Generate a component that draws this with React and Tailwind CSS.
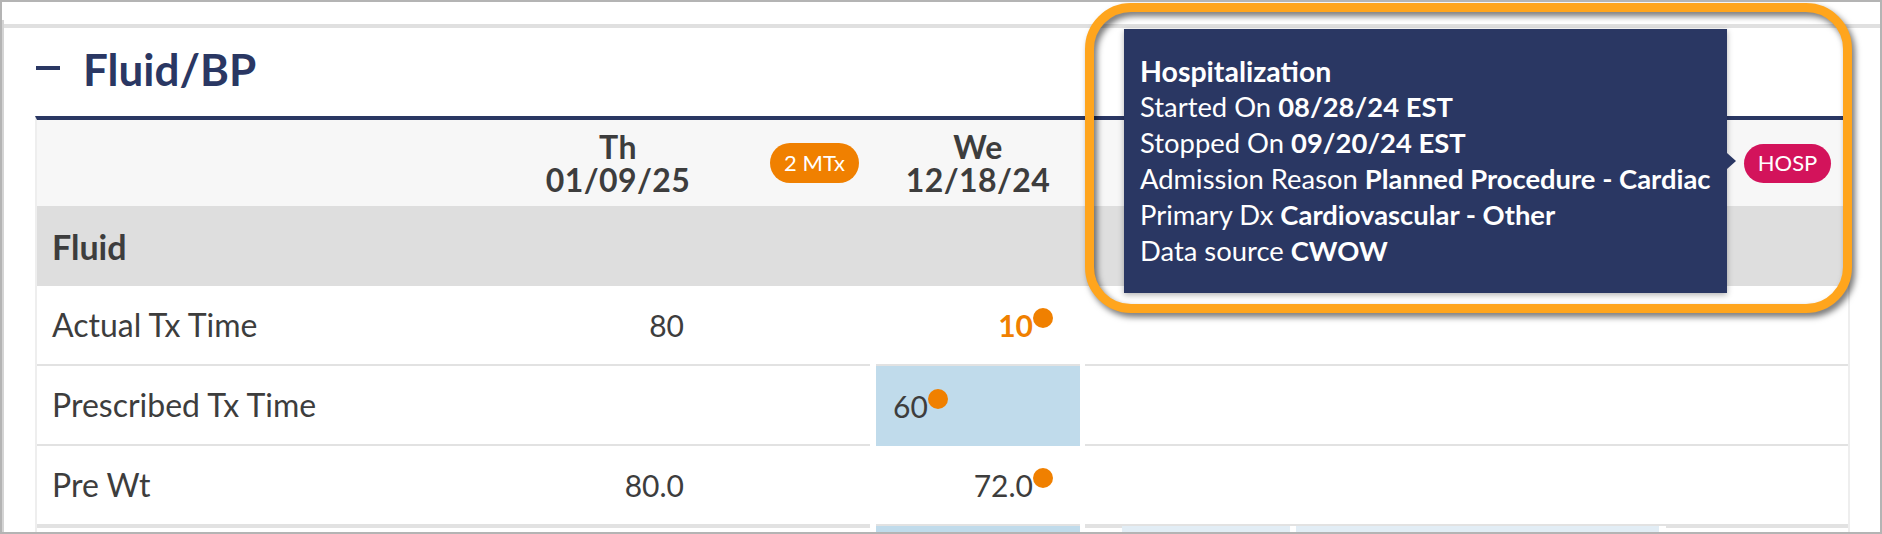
const NAVY = 'bg-[#2a3763]'

function Dot({ className = '' }) {
  return <span className={`inline-block w-[20px] h-[20px] rounded-full bg-[#f08000] ${className}`} />
}

function Value({ children, dot, orange }) {
  return (
    <span className="inline-flex items-start">
      <span className={orange ? 'text-[#f08000] font-bold' : ''}>{children}</span>
      {dot && <Dot className="-mt-[2px]" />}
    </span>
  )
}

function Row({ label, c1, c2, c2Blue }) {
  const line = 'border-b-2 border-[#e2e2e2]'
  return (
    <div className="flex h-[80px] text-[30px] leading-[30px] text-[#3d3d3d]">
      <div className={`w-[468px] flex items-center pl-[15px] text-[32px] ${line}`}>{label}</div>
      <div className={`w-[226px] flex items-center justify-end pr-[47px] ${line}`}>{c1}</div>
      <div className={`w-[139px] ${line}`} />
      <div className="w-[6px]" />
      {c2Blue ? (
        <div className="w-[204px] flex items-center pl-[17px] bg-[#c0dbeb]">{c2}</div>
      ) : (
        <div className={`w-[204px] flex items-center justify-end pr-[27px] ${line}`}>{c2}</div>
      )}
      <div className="w-[5px]" />
      <div className={`flex-1 ${line}`} />
    </div>
  )
}

export default function App() {
  return (
    <div className="relative w-[1882px] h-[534px] overflow-hidden bg-white border-2 border-[#b4b4b4] [font-family:Lato,'Open_Sans',sans-serif]">
      <div className="h-full pt-[18px]">
        <div className="h-full border-l-2 border-[#d4d4d4]">
          <div className="h-[4px]" />
          <div className="h-[4px] bg-[#e0e0e0]" />
          <div className="pl-[31px] pr-[30px]">
            <div className="h-[88px] flex items-start pt-[19px]">
              <div className={`ml-[1px] mt-[19px] w-[24px] h-[4px] ${NAVY}`} />
              <h1 className="ml-[23px] text-[44px] leading-[44px] font-bold text-[#2a3763]">Fluid/BP</h1>
            </div>

            <div className="border-t-4 border-t-[#2a3763] border-x-2 border-x-[#eeeeee]">
              <div className="flex h-[86px] bg-[#f7f7f7] text-[32px] leading-[33px] tracking-[0.4px] font-bold text-[#3d3d3d]">
                <div className="w-[468px]" />
                <div className="w-[226px] flex flex-col items-center justify-center">
                  <span>Th</span>
                  <span>01/09/25</span>
                </div>
                <div className="w-[139px] flex items-center justify-end pr-[11px]">
                  <span className="w-[89px] h-[40px] rounded-full bg-[#f08000] text-white text-[22px] leading-none tracking-normal font-normal flex items-center justify-center">2 MTx</span>
                </div>
                <div className="w-[6px]" />
                <div className="w-[204px] flex flex-col items-center justify-center">
                  <span>We</span>
                  <span>12/18/24</span>
                </div>
                <div className="w-[5px]" />
                <div className="flex-1 flex items-center justify-end pr-[17px]">
                  <span className="w-[87px] h-[39px] rounded-full bg-[#d3135b] text-white text-[22px] leading-none tracking-normal font-normal flex items-center justify-center">HOSP</span>
                </div>
              </div>

              <div className="h-[80px] bg-[#dedede] flex items-center pl-[15px] text-[34px] font-bold text-[#3d3d3d]">Fluid</div>

              <Row label="Actual Tx Time" c1="80" c2={<Value dot orange>10</Value>} />
              <Row label="Prescribed Tx Time" c2={<Value dot>60</Value>} c2Blue />
              <Row label="Pre Wt" c1="80.0" c2={<Value dot>72.0</Value>} />

              <div className="flex h-[80px]">
                <div className="w-[833px] border-t-2 border-[#e2e2e2]" />
                <div className="w-[6px]" />
                <div className="w-[204px] bg-[#c0dbeb]" />
                <div className="w-[5px]" />
                <div className="w-[37px] border-t-2 border-[#e2e2e2]" />
                <div className="w-[168px] bg-[#e2edf5]" />
                <div className="w-[6px]" />
                <div className="w-[363px] bg-[#e2edf5]" />
                <div className="w-[7px]" />
                <div className="flex-1 border-t-2 border-[#e2e2e2]" />
              </div>
            </div>
          </div>
        </div>
      </div>

      {/* tooltip */}
      <div className={`absolute left-[1122px] top-[27px] ${NAVY} text-white text-[27.4px] leading-[36px] px-[16px] py-[24px] whitespace-nowrap shadow-[0_2px_6px_rgba(0,0,0,0.3)]`}>
        <div className="font-bold text-[28.5px]">Hospitalization</div>
        <div>Started On <b>08/28/24 EST</b></div>
        <div>Stopped On <b>09/20/24 EST</b></div>
        <div>Admission Reason <b>Planned Procedure - Cardiac</b></div>
        <div>Primary Dx <b>Cardiovascular - Other</b></div>
        <div>Data source <b>CWOW</b></div>
        <span className="absolute left-full top-1/2 -translate-y-1/2 w-0 h-0 border-y-[8px] border-y-transparent border-l-[9px] border-l-[#2a3763]" />
      </div>

      {/* annotation ring */}
      <div className="absolute left-[1083px] top-[1px] w-[767px] h-[310px] rounded-[46px] border-[9px] border-[#ffa51d] drop-shadow-[3px_4px_3px_rgba(0,0,0,0.55)]" />
    </div>
  )
}
